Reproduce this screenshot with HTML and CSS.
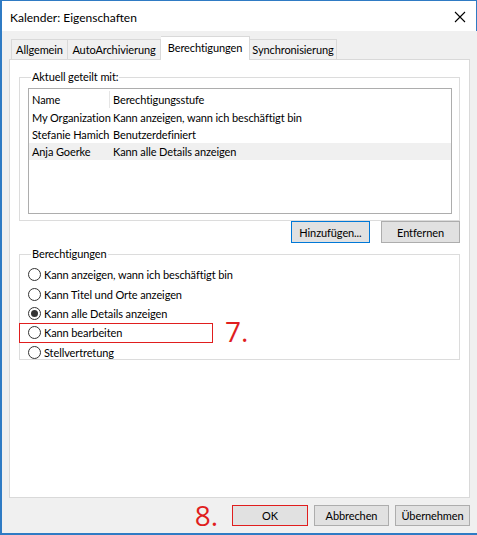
FILE: index.html
```html
<!DOCTYPE html>
<html>
<head>
	<title>Kalender: Eigenschaften</title>
	<link rel="stylesheet" href="styles.css">
</head>
<body>
	<div class="window">
		<div class="titlebar">
			<span class="title">Kalender: Eigenschaften</span>
			<svg class="close" width="12" height="12" viewBox="0 0 12 12">
				<path d="M1 1 L11 11 M11 1 L1 11" stroke="#000" stroke-width="1.1" fill="none"/>
			</svg>
		</div>
		<div class="body">
			<div class="tabs">
				<div class="tab tab-first tab-general">Allgemein</div>
				<div class="tab tab-archive">AutoArchivierung</div>
				<div class="tab tab-perms active">Berechtigungen</div>
				<div class="tab tab-sync">Synchronisierung</div>
			</div>
			<div class="panel">
				<fieldset class="group group-shared">
					<legend>Aktuell geteilt mit:</legend>
					<div class="list">
						<div class="row head">
							<span class="col-name">Name</span>
							<span class="col-level">Berechtigungsstufe</span>
						</div>
						<div class="row">
							<span class="col-name">My Organization</span>
							<span class="col-level">Kann anzeigen, wann ich beschäftigt bin</span>
						</div>
						<div class="row">
							<span class="col-name">Stefanie Hamich</span>
							<span class="col-level">Benutzerdefiniert</span>
						</div>
						<div class="row selected">
							<span class="col-name">Anja Goerke</span>
							<span class="col-level">Kann alle Details anzeigen</span>
						</div>
					</div>
				</fieldset>
				<div class="list-actions">
					<button class="btn btn-default">Hinzufügen...</button>
					<button class="btn">Entfernen</button>
				</div>
				<fieldset class="group group-perms">
					<legend>Berechtigungen</legend>
					<label class="radio"><span class="dot"></span>Kann anzeigen, wann ich beschäftigt bin</label>
					<label class="radio"><span class="dot"></span>Kann Titel und Orte anzeigen</label>
					<label class="radio"><span class="dot checked"></span>Kann alle Details anzeigen</label>
					<div class="marked-row">
						<label class="radio marked"><span class="dot"></span>Kann bearbeiten</label>
						<span class="step">7.</span>
					</div>
					<label class="radio"><span class="dot"></span>Stellvertretung</label>
				</fieldset>
			</div>
			<div class="footer">
				<span class="step step-ok">8.</span>
				<button class="btn btn-footer btn-marked">OK</button>
				<button class="btn btn-footer">Abbrechen</button>
				<button class="btn btn-footer">Übernehmen</button>
			</div>
		</div>
	</div>
</body>
</html>
```

FILE: styles.css
```css
* {
	box-sizing: border-box;
}
body {
	margin: 0;
	background: #fff;
	font-family: Lato, 'Noto Sans', sans-serif;
	font-size: 11px;
	letter-spacing: -0.1px;
	color: #000;
}
.window {
	width: 477px;
	height: 535px;
	border-top: 1px solid #2f7bc4;
	border-left: 2px solid #2f7bc4;
	border-bottom: 2px solid #2f7bc4;
	display: flex;
	flex-direction: column;
	background: #f0f0f0;
}
.titlebar {
	height: 30px;
	background: #fff;
	display: flex;
	align-items: center;
	justify-content: space-between;
	padding: 0 10px 0 8px;
	border-right: 1px solid #2f7bc4;
}
.title {
	font-size: 12px;
	letter-spacing: 0;
	padding-top: 2px;
}
.close {
	margin-top: 2px;
}
.body {
	flex: 1;
	display: flex;
	flex-direction: column;
	padding: 4px 7px 0 7px;
}
.tabs {
	display: flex;
	align-items: flex-end;
	height: 24px;
	padding-left: 2px;
}
.tab {
	height: 20px;
	line-height: 20px;
	text-align: center;
	border: 1px solid #d9d9d9;
	border-bottom: none;
	border-left: none;
	background: #f0f0f0;
}
.tab-first {
	border-left: 1px solid #d9d9d9;
}
.tab-general {
	width: 57px;
}
.tab-archive {
	width: 93px;
}
.tab-perms {
	width: 89px;
}
.tab-sync {
	width: 87px;
}
.tab.active {
	height: 24px;
	line-height: 21px;
	background: #fff;
	margin-bottom: -1px;
	position: relative;
}
.panel {
	height: 439px;
	background: #fff;
	border: 1px solid #d9d9d9;
	padding: 10px 9px 0 9px;
}
.group {
	margin: 0;
	border: 1px solid #dcdcdc;
	padding: 0;
}
.group legend {
	padding: 0 1px;
	margin-left: 3px;
	line-height: 14px;
}
.group-shared {
	height: 151px;
	padding: 4px 7px 0 8px;
}
.list {
	height: 126px;
	border: 1px solid #adadad;
	padding: 1px 0 0 0;
}
.row {
	display: flex;
	height: 17px;
	line-height: 17px;
}
.row.head {
	height: 19px;
	line-height: 19px;
}
.col-name {
	width: 81px;
	padding-left: 3px;
	white-space: nowrap;
}
.head .col-name {
	border-right: 1px solid #e5e5e5;
	height: 17px;
	margin-top: 1px;
	line-height: 17px;
}
.col-level {
	padding-left: 3px;
	white-space: nowrap;
}
.row.selected {
	background: #f0f0f0;
}
.list-actions {
	display: flex;
	justify-content: flex-end;
	gap: 11px;
	padding: 0;
	height: 26px;
}
.btn {
	font-family: Lato, 'Noto Sans', sans-serif;
	font-size: 11px;
	letter-spacing: -0.1px;
	width: 79px;
	height: 22px;
	padding: 0;
	background: #e1e1e1;
	border: 1px solid #adadad;
	color: #000;
}
.btn-default {
	border: 1px solid #0078d7;
	box-shadow: inset 0 0 0 1px #e1e1e1;
}
.group-perms {
	height: 113px;
	padding: 4px 7px 0 8px;
}
.radio {
	display: flex;
	align-items: center;
	height: 19.5px;
	white-space: nowrap;
}
.dot {
	width: 13px;
	height: 13px;
	border: 1px solid #333;
	border-radius: 50%;
	margin-right: 3px;
	display: flex;
	align-items: center;
	justify-content: center;
}
.dot.checked::after {
	content: "";
	width: 7px;
	height: 7px;
	border-radius: 50%;
	background: #333;
}
.marked-row {
	display: flex;
	align-items: center;
	margin-left: -9px;
}
.radio.marked {
	width: 194px;
	height: 20px;
	margin-top: -1px;
	border: 1px solid #e01e1e;
	padding-left: 8px;
}
.step {
	color: #e01e1e;
	font-family: 'Open Sans', sans-serif;
	font-size: 28px;
	letter-spacing: 0;
	line-height: 20px;
	margin-left: 12px;
	margin-top: -4px;
}
.footer {
	flex: 1;
	display: flex;
	align-items: center;
	justify-content: flex-end;
	gap: 6px;
	padding: 0;
}
.btn-footer {
	width: 75px;
	height: 21px;
}
.btn.btn-marked {
	width: 76px;
	border: 1px solid #e01e1e;
	margin-left: 8px;
}
.step-ok {
	margin: -2px 0 0 0;
}
```
